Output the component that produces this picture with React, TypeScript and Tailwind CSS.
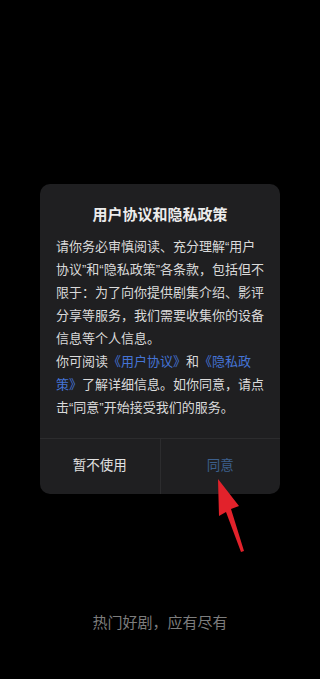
const lines1 = [
  "请你务必审慎阅读、充分理解“用户",
  "协议”和“隐私政策”各条款，包括但不",
  "限于：为了向你提供剧集介绍、影评",
  "分享等服务，我们需要收集你的设备",
  "信息等个人信息。",
];

function Arrow() {
  return (
    <svg
      className="pointer-events-none absolute left-0 top-0"
      width="320"
      height="679"
      viewBox="0 0 320 679"
    >
      <path d="M218 479 L239 506 L231 509 L244 551 L241 552 L226 512 L219 516 Z" fill="#e2222b" />
    </svg>
  );
}

export default function App() {
  return (
    <div
      className="relative flex h-[679px] w-[320px] flex-col items-center overflow-hidden bg-black"
      style={{ fontFamily: '"Liberation Sans", "Noto Sans CJK SC", sans-serif' }}
    >
      <div className="mt-[184px] w-[240px] rounded-[10px] bg-[#1f1f21]">
        <div className="px-4 pb-[19px] pt-[19px]">
          <h1 className="text-center text-[15px] font-semibold leading-[24px] text-[#ececec]">
            用户协议和隐私政策
          </h1>
          <div className="mt-[8px] text-[13px] leading-[23px] text-[#dadada]">
            {lines1.map((l) => (
              <div key={l} className="whitespace-nowrap">
                {l}
              </div>
            ))}
            <div className="whitespace-nowrap">
              你可阅读<span className="text-[#4574d6]">《用户协议》</span>和
              <span className="text-[#4574d6]">《隐私政</span>
            </div>
            <div className="whitespace-nowrap">
              <span className="text-[#4574d6]">策》</span>了解详细信息。如你同意，请点
            </div>
            <div className="whitespace-nowrap">击“同意”开始接受我们的服务。</div>
          </div>
        </div>
        <div className="flex h-[56px] border-t border-[#2c2c2e]">
          <button className="flex flex-1 items-center justify-center border-r border-[#2c2c2e] text-[13.5px] text-[#e2e2e2]">
            暂不使用
          </button>
          <button className="flex flex-1 items-center justify-center text-[13.5px] text-[#3c5f8c]">
            同意
          </button>
        </div>
      </div>
      <div className="mt-[118px] text-[15px] leading-[22px] text-[#7d7d7d]">热门好剧，应有尽有</div>
      <Arrow />
    </div>
  );
}
